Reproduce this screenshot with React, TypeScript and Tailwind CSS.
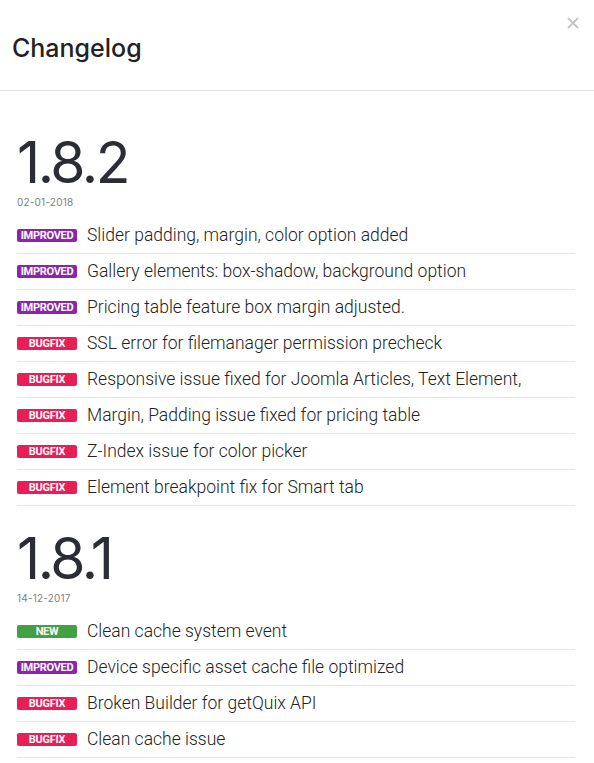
import React from "react";

type Tag = "IMPROVED" | "BUGFIX" | "NEW";

interface Entry {
  tag: Tag;
  text: string;
}

interface Release {
  version: string;
  date: string;
  entries: Entry[];
}

const releases: Release[] = [
  {
    version: "1.8.2",
    date: "02-01-2018",
    entries: [
      { tag: "IMPROVED", text: "Slider padding, margin, color option added" },
      { tag: "IMPROVED", text: "Gallery elements: box-shadow, background option" },
      { tag: "IMPROVED", text: "Pricing table feature box margin adjusted." },
      { tag: "BUGFIX", text: "SSL error for filemanager permission precheck" },
      { tag: "BUGFIX", text: "Responsive issue fixed for Joomla Articles, Text Element," },
      { tag: "BUGFIX", text: "Margin, Padding issue fixed for pricing table" },
      { tag: "BUGFIX", text: "Z-Index issue for color picker" },
      { tag: "BUGFIX", text: "Element breakpoint fix for Smart tab" },
    ],
  },
  {
    version: "1.8.1",
    date: "14-12-2017",
    entries: [
      { tag: "NEW", text: "Clean cache system event" },
      { tag: "IMPROVED", text: "Device specific asset cache file optimized" },
      { tag: "BUGFIX", text: "Broken Builder for getQuix API" },
      { tag: "BUGFIX", text: "Clean cache issue" },
    ],
  },
];

const tagStyles: Record<Tag, string> = {
  IMPROVED: "bg-[#8e24aa]",
  BUGFIX: "bg-[#e91e54]",
  NEW: "bg-[#43a043]",
};

const Badge: React.FC<{ tag: Tag }> = ({ tag }) => (
  <span
    className={`inline-flex h-[13px] w-[60px] shrink-0 items-center justify-center rounded-[2px] text-[11px] font-bold leading-none tracking-[-0.3px] text-white ${tagStyles[tag]}`}
  >
    {tag}
  </span>
);

const App: React.FC = () => {
  return (
    <div className="min-h-[763px] w-[594px] bg-white font-['Roboto',sans-serif] text-[#333]">
      <div className="relative h-[91px] border-b border-[#e2e2e2] px-3 pt-[31px]">
        <h1 className="font-['Inter',sans-serif] text-[25px] font-medium leading-[34px] text-[#222]">
          Changelog
        </h1>
        <button className="absolute right-[15px] top-[17px] text-[#c4c4c4]">
          <svg width="12" height="12" viewBox="0 0 12 12">
            <path d="M1 1 L11 11 M11 1 L1 11" stroke="currentColor" strokeWidth="1.8" />
          </svg>
        </button>
      </div>

      <div className="pl-[17px] pr-[19px] pt-[49px]">
        {releases.map((release) => (
          <div key={release.version} className="mb-[30px]">
            <div className="font-['Inter',sans-serif] text-[57px] font-normal leading-[46px] tracking-[-2.5px] text-[#2a2d34]">
              {release.version}
            </div>
            <div className="mt-[10px] font-['Inter',sans-serif] text-[10px] leading-[12px] tracking-[0.2px] text-[#808080]">
              {release.date}
            </div>
            <ul className="mt-[10px]">
              {release.entries.map((entry, i) => (
                <li
                  key={i}
                  className="flex h-[36px] items-center gap-[10px] border-b border-[#e6e6e6] pb-[1px]"
                >
                  <Badge tag={entry.tag} />
                  <span className="text-[17.5px] font-light text-[#222]">{entry.text}</span>
                </li>
              ))}
            </ul>
          </div>
        ))}
      </div>
    </div>
  );
};

export default App;
